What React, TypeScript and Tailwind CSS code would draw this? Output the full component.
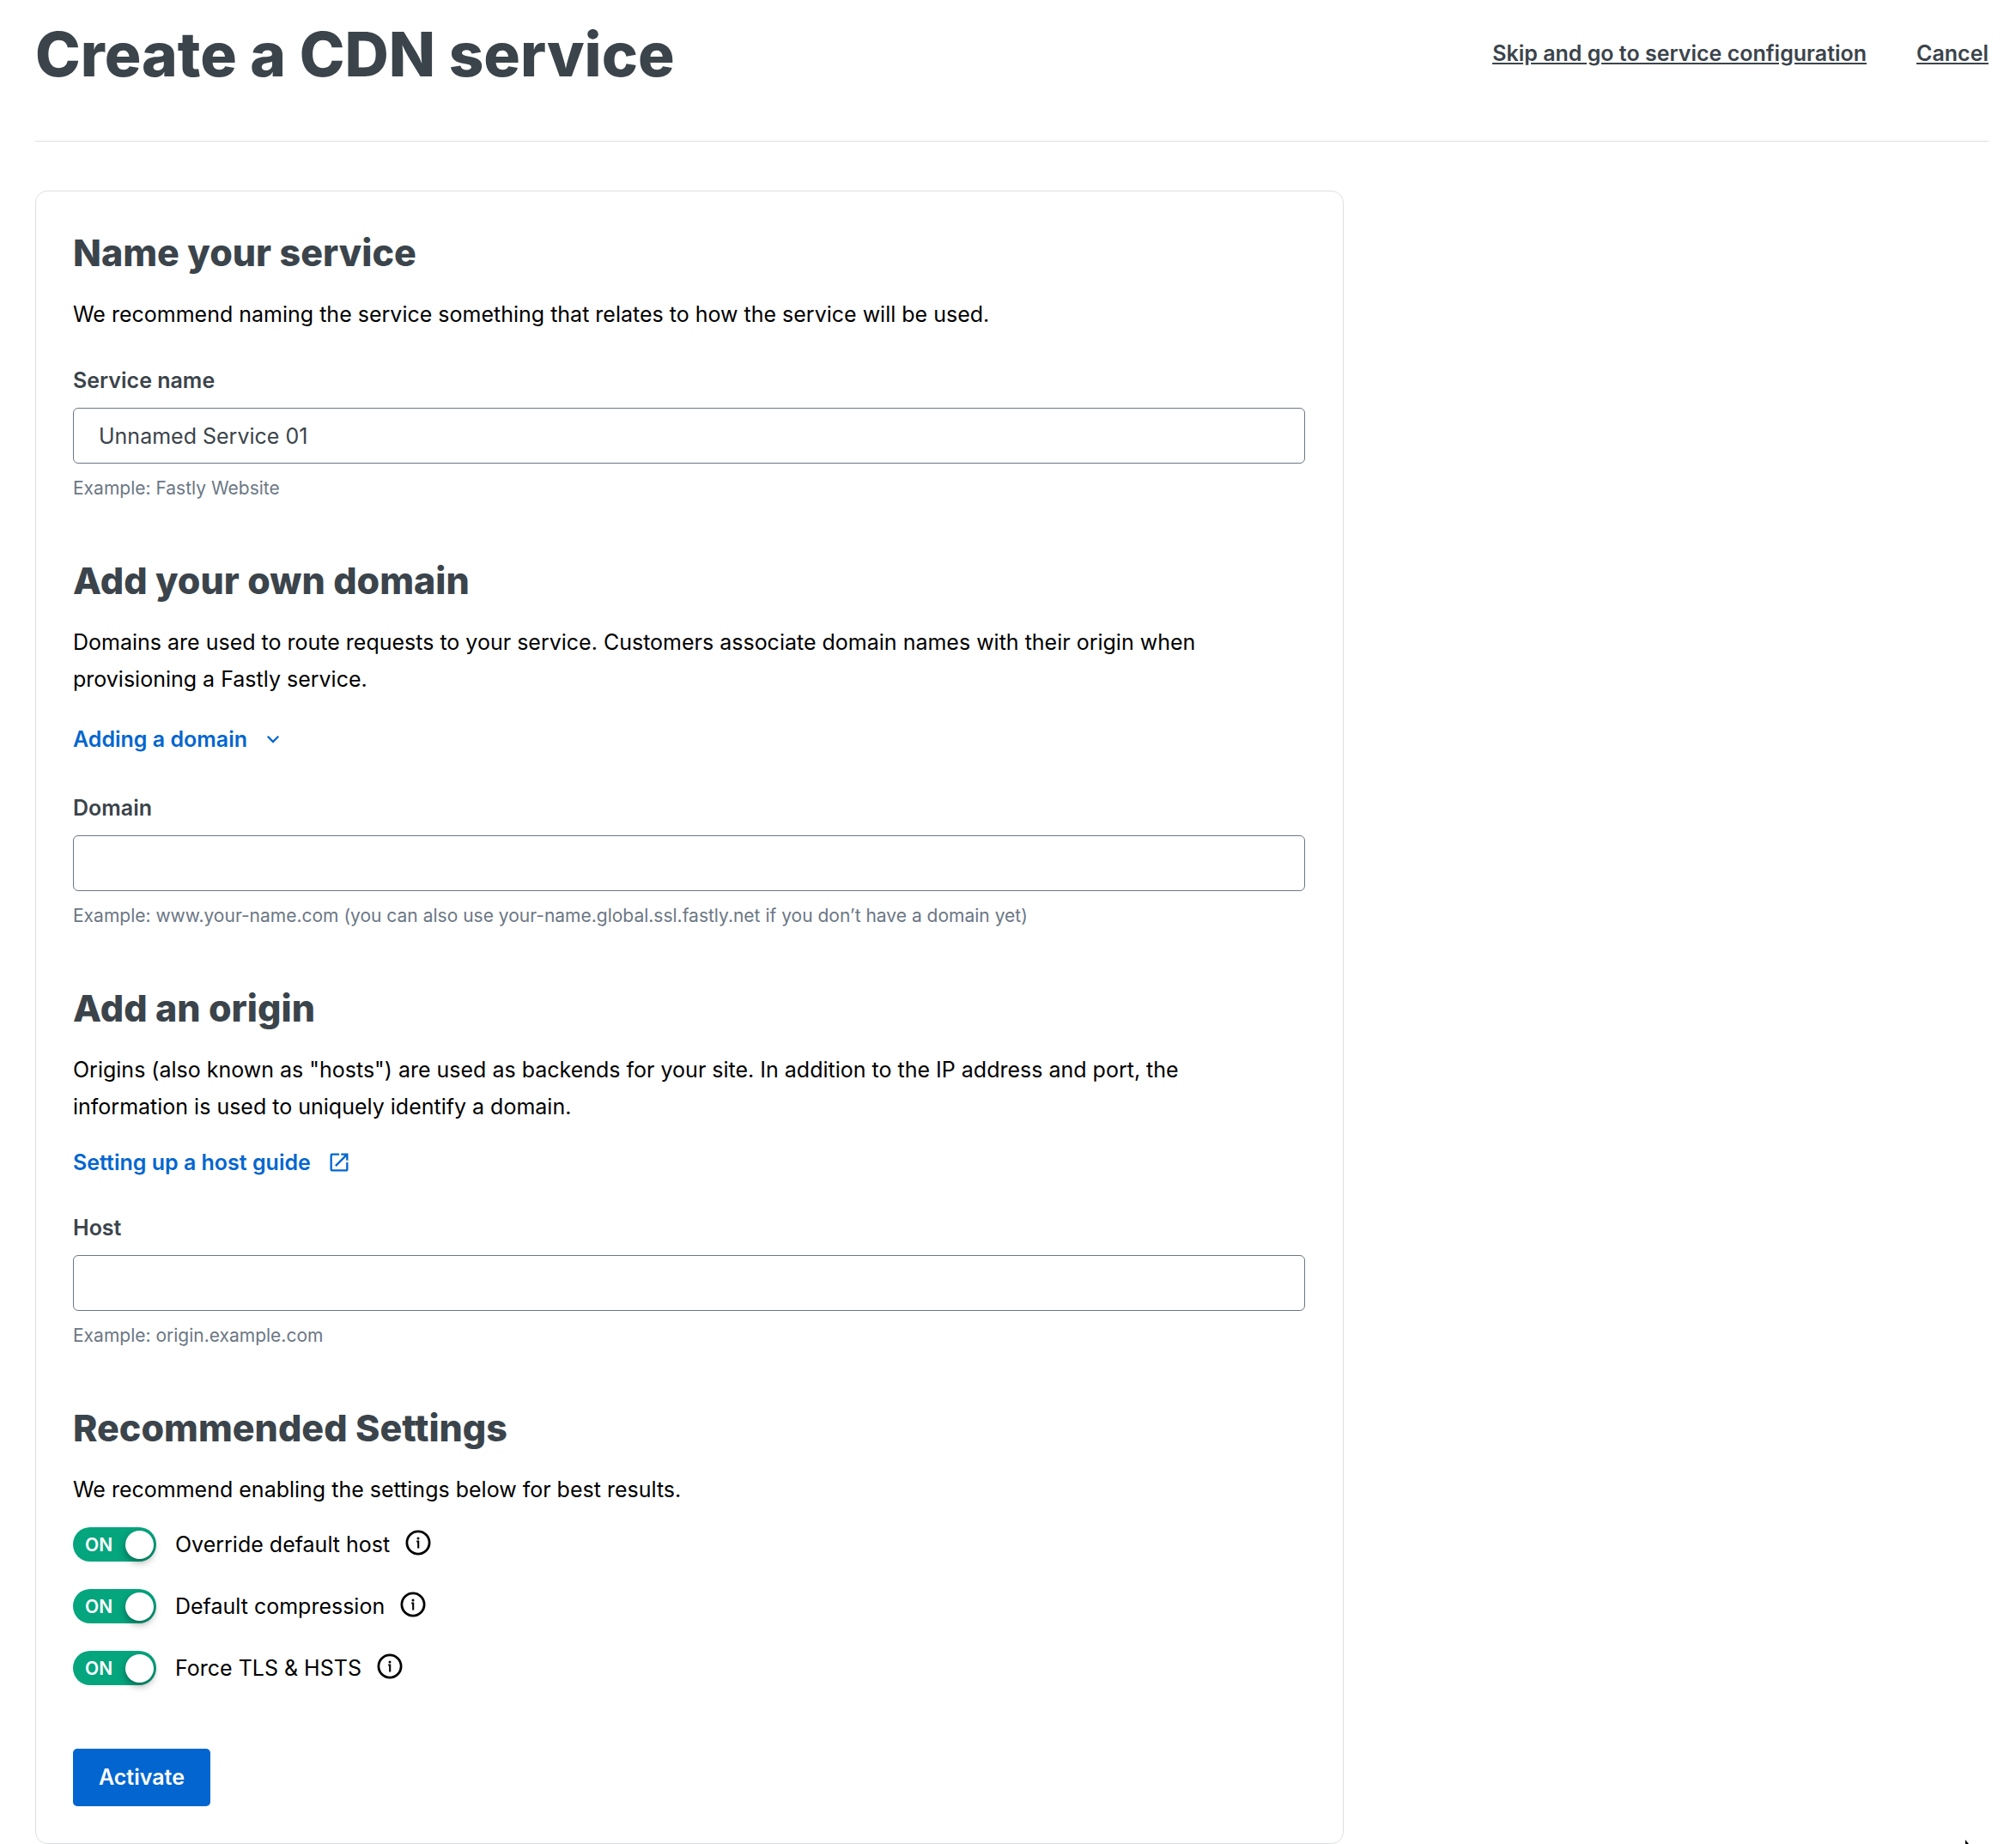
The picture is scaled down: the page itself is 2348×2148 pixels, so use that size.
import { useState } from "react";
import type { ReactNode } from "react";
import { MdOpenInNew } from "react-icons/md";

interface FieldProps {
  id: string;
  label: string;
  hint: string;
  initial?: string;
}

function Field({ id, label, hint, initial = "" }: FieldProps) {
  const [value, setValue] = useState(initial);

  return (
    <div className="flex flex-col">
      <label htmlFor={id} className="text-[25px] leading-[30px] font-semibold text-[#3b444b]">
        {label}
      </label>
      <input
        id={id}
        type="text"
        value={value}
        aria-describedby={`${id}-hint`}
        onChange={(e) => setValue(e.target.value)}
        className="mt-[17px] h-[65px] w-full rounded-md border border-[#6b7785] bg-white px-[29px] text-[25px] text-[#3b444b] outline-none focus:border-[#0366d0]"
      />
      <p id={`${id}-hint`} className="mt-[15px] text-[21px] leading-[28px] text-[#6b7785]">
        {hint}
      </p>
    </div>
  );
}

interface SectionProps {
  title: string;
  text: string;
  children: ReactNode;
}

function Section({ title, text, children }: SectionProps) {
  return (
    <section>
      <h2 className="text-[43px] leading-[56px] font-extrabold text-[#3b444b]">{title}</h2>
      <p className="mt-[23px] pr-5 text-[25px] leading-[43px] text-black">{text}</p>
      {children}
    </section>
  );
}

function InfoIcon() {
  return (
    <svg viewBox="0 0 30 30" className="size-[30px]" fill="none" stroke="currentColor" aria-hidden="true">
      <circle cx="15" cy="15" r="13.1" strokeWidth="2.8" />
      <path d="M13.2 13.500h2v8" strokeWidth="2.1" />
      <circle cx="15" cy="10" r="1.500" fill="currentColor" stroke="none" />
    </svg>
  );
}

function Toggle({ id, label }: { id: string; label: string }) {
  const [on, setOn] = useState(true);

  return (
    <div className="flex h-10 items-center">
      <label htmlFor={id} className="relative flex cursor-pointer items-center gap-[22px]">
        <input
          id={id}
          type="checkbox"
          role="switch"
          checked={on}
          onChange={(e) => setOn(e.target.checked)}
          className="peer sr-only"
        />
        <span
          aria-hidden="true"
          className="flex h-10 w-[97px] items-center justify-between rounded-full bg-[#8b95a0] pr-[3px] pl-[14px] text-[21px] leading-none font-semibold text-white peer-checked:bg-[#05a57e]"
        >
          {on ? "ON" : "OFF"}
          <span className="size-[33px] rounded-full bg-white shadow-[0_4px_8px_rgba(0,0,0,0.35)]" />
        </span>
        <span className="text-[25px] leading-[43px] text-black">{label}</span>
      </label>
      <button type="button" aria-label={`About ${label}`} className="mb-1 ml-[18px] text-black">
        <InfoIcon />
      </button>
    </div>
  );
}

const SETTINGS = [
  { id: "override-host", label: "Override default host" },
  { id: "compression", label: "Default compression" },
  { id: "force-tls", label: "Force TLS & HSTS" },
];

export default function App() {
  return (
    <div className="min-h-screen bg-white pr-8 pl-[41px] font-['Inter',sans-serif]">
      <header className="flex items-center justify-between border-b border-[#dcdfe1] pt-[18px] pb-[56px]">
        <h1 className="text-[71px] leading-[90px] font-extrabold text-[#3b444b]">Create a CDN service</h1>
        <nav className="flex gap-[58px] text-[25px] font-semibold text-[#3b444b] underline">
          <a href="#configuration">Skip and go to service configuration</a>
          <a href="#cancel">Cancel</a>
        </nav>
      </header>

      <form
        onSubmit={(e) => e.preventDefault()}
        className="mt-[57px] flex w-[67%] flex-col gap-[65px] rounded-[14px] border border-[#dcdfe1] py-[43px] pr-11 pl-[43px]"
      >
        <Section
          title="Name your service"
          text="We recommend naming the service something that relates to how the service will be used."
        >
          <div className="mt-10">
            <Field
              id="service-name"
              label="Service name"
              hint="Example: Fastly Website"
              initial="Unnamed Service 01"
            />
          </div>
        </Section>

        <Section
          title="Add your own domain"
          text="Domains are used to route requests to your service. Customers associate domain names with their origin when provisioning a Fastly service."
        >
          <button
            type="button"
            className="mt-[33px] mb-[50px] flex items-center gap-[22px] text-[25px] leading-[30px] font-semibold text-[#0366d0]"
          >
            Adding a domain
            <svg viewBox="0 0 16 16" className="size-4" fill="none" stroke="currentColor" strokeWidth="2.3" aria-hidden="true">
              <path d="M1.8 4.8 8 11l6.200-6.200" />
            </svg>
          </button>
          <Field
            id="domain"
            label="Domain"
            hint="Example: www.your-name.com (you can also use your-name.global.ssl.fastly.net if you don’t have a domain yet)"
          />
        </Section>

        <Section
          title="Add an origin"
          text={'Origins (also known as "hosts") are used as backends for your site. In addition to the IP address and port, the information is used to uniquely identify a domain.'}
        >
          <a
            href="#host-guide"
            className="mt-7 mb-[46px] flex w-fit items-center gap-[19px] text-[25px] leading-[30px] font-semibold text-[#0366d0]"
          >
            Setting up a host guide
            <MdOpenInNew className="size-7" />
          </a>
          <Field id="host" label="Host" hint="Example: origin.example.com" />
        </Section>

        <Section title="Recommended Settings" text="We recommend enabling the settings below for best results.">
          <div className="mt-[22px] flex flex-col gap-8">
            {SETTINGS.map((s) => (
              <Toggle key={s.id} id={s.id} label={s.label} />
            ))}
          </div>
          <button
            type="submit"
            className="mt-[74px] h-[67px] rounded-[5px] bg-[#0366d0] px-[30px] text-[25px] font-semibold text-white"
          >
            Activate
          </button>
        </Section>
      </form>

      {/* pointer resting at the bottom edge */}
      <svg viewBox="0 0 6 5" className="fixed right-[54px] bottom-0 h-[5px] w-[6px]" aria-hidden="true">
        <path d="M1 0v5h4z" />
      </svg>
    </div>
  );
}
